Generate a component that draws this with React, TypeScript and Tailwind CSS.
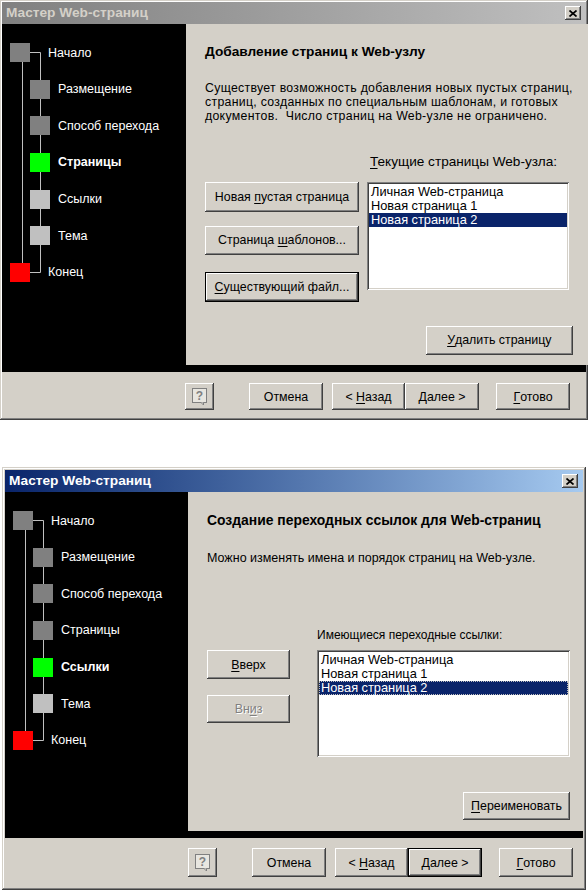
import React from "react";

type Step = { label: string; level: 1 | 2; sq: string; current?: boolean };

const raised =
  "shadow-[inset_-1px_-1px_0_#404040,inset_1px_1px_0_#fff,inset_-2px_-2px_0_#808080]";
const raisedDefault =
  "shadow-[inset_0_0_0_1px_#000,inset_-2px_-2px_0_#404040,inset_2px_2px_0_#fff,inset_-3px_-3px_0_#808080]";
const sunken =
  "shadow-[inset_1px_1px_0_#808080,inset_-1px_-1px_0_#fff,inset_2px_2px_0_#404040,inset_-2px_-2px_0_#d4d0c8]";

function U({ children }: { children: React.ReactNode }) {
  return <span className="underline underline-offset-[2px]">{children}</span>;
}

function Btn({
  children,
  className = "",
  def = false,
  disabled = false,
}: {
  children: React.ReactNode;
  className?: string;
  def?: boolean;
  disabled?: boolean;
}) {
  return (
    <button
      type="button"
      className={`flex items-center justify-center bg-[#d4d0c8] text-[12.4px] leading-[14px] ${
        def ? raisedDefault : raised
      } ${disabled ? "text-[#808080] [text-shadow:1px_1px_0_#fff]" : "text-black"} ${className}`}
    >
      {children}
    </button>
  );
}

function CloseBox() {
  return (
    <div className={`flex h-[14px] w-[16px] items-center justify-center bg-[#d4d0c8] ${raised}`}>
      <svg width="8" height="7" viewBox="0 0 8 7">
        <path d="M0.5 0.5L7.5 6.5M7.5 0.5L0.5 6.5" stroke="#000" strokeWidth="1.7" />
      </svg>
    </div>
  );
}

function HelpIcon() {
  return (
    <svg width="18" height="19" viewBox="0 0 18 19">
      <rect x="1.5" y="1.5" width="14" height="14" fill="#e8e6e0" stroke="#808080" />
      <path d="M10 15.5L12.5 18L12.5 15.5" fill="#e8e6e0" stroke="#808080" />
      <text
        x="8.5"
        y="13"
        textAnchor="middle"
        fontSize="12"
        fontWeight="bold"
        fill="#808080"
        fontFamily="Liberation Sans, sans-serif"
      >
        ?
      </text>
    </svg>
  );
}

function Tree({ steps }: { steps: Step[] }) {
  return (
    <div className="relative h-full w-full bg-black">
      <svg className="absolute left-0 top-0" width="184" height="280">
        <path
          d="M20.5 38V239M38.5 28.5V248.5M28 28.5H38.5M28 248.5H38.5"
          stroke="#c0c0c0"
          strokeWidth="1"
          fill="none"
        />
      </svg>
      <div className="relative flex flex-col pt-[19px]">
        {steps.map((s) => (
          <div key={s.label} className="h-[36.67px]">
            <div className="flex h-[19px] items-center">
              <div
                className={`h-[19px] w-[20px] shrink-0 ${s.sq} ${s.level === 1 ? "ml-[8px]" : "ml-[28px]"}`}
              />
              <span
                className={`whitespace-nowrap text-[12.5px] leading-[14px] text-white ${
                  s.level === 1 ? "ml-[18px]" : "ml-[8px]"
                } ${s.current ? "font-bold" : ""}`}
              >
                {s.label}
              </span>
            </div>
          </div>
        ))}
      </div>
    </div>
  );
}

function TitleBar({ active }: { active: boolean }) {
  return (
    <div
      className={`flex h-[22px] items-center justify-between pr-[5px] ${
        active
          ? "bg-linear-to-r from-[#0a246a] to-[#a6caf0] text-white"
          : "bg-linear-to-r from-[#808080] to-[#c0c0c0] text-[#d4d0c8]"
      }`}
    >
      <span className="pl-[4px] text-[13.7px] font-bold leading-[16px]">Мастер Web-страниц</span>
      <CloseBox />
    </div>
  );
}

function BottomBar({ h, pt, def }: { h: string; pt: string; def: boolean }) {
  return (
    <div className={`flex items-start ${pt}`}>
      <Btn className={`ml-[183px] w-[29px] ${h}`}>
        <HelpIcon />
      </Btn>
      <Btn className={`ml-[35px] w-[74px] ${h}`}>Отмена</Btn>
      <Btn className={`ml-[9px] w-[73px] ${h}`}>
        &lt;&nbsp;<U>Н</U>азад
      </Btn>
      <Btn def={def} className={`w-[74px] ${h}`}>
        <U>Д</U>алее &gt;
      </Btn>
      <Btn className={`ml-[17px] w-[74px] ${h}`}>
        <U>Г</U>отово
      </Btn>
    </div>
  );
}

const steps1: Step[] = [
  { label: "Начало", level: 1, sq: "bg-[#808080]" },
  { label: "Размещение", level: 2, sq: "bg-[#808080]" },
  { label: "Способ перехода", level: 2, sq: "bg-[#808080]" },
  { label: "Страницы", level: 2, sq: "bg-[#00ff00]", current: true },
  { label: "Ссылки", level: 2, sq: "bg-[#c0c0c0]" },
  { label: "Тема", level: 2, sq: "bg-[#c0c0c0]" },
  { label: "Конец", level: 1, sq: "bg-[#ff0000]" },
];

const steps2: Step[] = [
  { label: "Начало", level: 1, sq: "bg-[#808080]" },
  { label: "Размещение", level: 2, sq: "bg-[#808080]" },
  { label: "Способ перехода", level: 2, sq: "bg-[#808080]" },
  { label: "Страницы", level: 2, sq: "bg-[#808080]" },
  { label: "Ссылки", level: 2, sq: "bg-[#00ff00]", current: true },
  { label: "Тема", level: 2, sq: "bg-[#c0c0c0]" },
  { label: "Конец", level: 1, sq: "bg-[#ff0000]" },
];

function ListItems({ focus }: { focus?: boolean }) {
  return (
    <div className="flex flex-col px-[2px] pt-[3px] text-[12.8px] leading-[14px] text-black">
      <div className="pl-[2px]">Личная Web-страница</div>
      <div className="pl-[2px]">Новая страница 1</div>
      <div
        className={`bg-[#0a246a] text-white ${
          focus ? "border border-dotted border-[#c0c0c0] pl-[1px] leading-[12px]" : "pl-[2px]"
        }`}
      >
        Новая страница 2
      </div>
    </div>
  );
}

function WizardPages() {
  return (
    <div className="flex h-[341px]">
      <div className="w-[184px] shrink-0">
        <Tree steps={steps1} />
      </div>
      <div className="flex flex-1 flex-col bg-[#d4d0c8] pl-[19px] pr-[15px] pt-[20px] text-black">
        <h2 className="text-[13.7px] font-bold leading-[16px]">Добавление страниц к Web-узлу</h2>
        <p className="mt-[21px] whitespace-nowrap text-[12.3px] leading-[14px] tracking-[0.3px]">
          Существует возможность добавления новых пустых страниц,
          <br />
          страниц, созданных по специальным шаблонам, и готовых
          <br />
          документов.&nbsp; Число страниц на Web-узле не ограничено.
        </p>
        <div className="ml-[165px] mt-[31.5px] text-[13.6px] leading-[14px]">
          <U>Т</U>екущие страницы Web-узла:
        </div>
        <div className="mt-[13px] flex items-start">
          <div className="flex w-[154px] flex-col">
            <Btn className="h-[30px] w-[154px]">
              Новая&nbsp;<U>п</U>устая страница
            </Btn>
            <Btn className="mt-[14px] h-[29px] w-[154px]">
              Страница&nbsp;<U>ш</U>аблонов...
            </Btn>
            <Btn def className="mt-[17px] h-[30px] w-[154px]">
              <U>С</U>уществующий файл...
            </Btn>
          </div>
          <div className={`ml-[8px] h-[108px] w-[202px] bg-white ${sunken}`}>
            <ListItems />
          </div>
        </div>
        <Btn className="mt-[24px] h-[29px] w-[147px] self-end">
          <U>У</U>далить страницу
        </Btn>
      </div>
    </div>
  );
}

function WizardLinks() {
  return (
    <div className="flex h-[339px]">
      <div className="w-[183px] shrink-0">
        <Tree steps={steps2} />
      </div>
      <div className="flex flex-1 flex-col bg-[#d4d0c8] pl-[19px] pr-[13px] pt-[20px] text-black">
        <h2 className="text-[13.9px] font-bold leading-[16px]">
          Создание переходных ссылок для Web-страниц
        </h2>
        <p className="mt-[23.5px] whitespace-nowrap text-[12.5px] leading-[13px]">
          Можно изменять имена и порядок страниц на Web-узле.
        </p>
        <div className="ml-[110px] mt-[63.5px] text-[12px] leading-[14px]">
          Имеющиеся переходные ссылки:
        </div>
        <div className="mt-[8px] flex items-start">
          <div className="flex w-[83px] flex-col">
            <Btn className="h-[29px] w-[83px]">
              <U>В</U>верх
            </Btn>
            <Btn disabled className="mt-[16px] h-[28px] w-[83px]">
              Вн<U>и</U>з
            </Btn>
          </div>
          <div className={`ml-[27px] h-[107px] w-[253px] bg-white ${sunken}`}>
            <ListItems focus />
          </div>
        </div>
        <Btn className="mt-[35px] h-[28px] w-[107px] self-end">
          <U>П</U>ереименовать
        </Btn>
      </div>
    </div>
  );
}

const frame =
  "bg-[#d4d0c8] shadow-[inset_-1px_-1px_0_#404040,inset_1px_1px_0_#d4d0c8,inset_-2px_-2px_0_#808080,inset_2px_2px_0_#fff]";

export default function App() {
  return (
    <div className="h-[891px] w-[588px] overflow-hidden bg-white font-['Liberation_Sans',Arial,sans-serif]">
      {/* inactive wizard: pages step */}
      <div className={`h-[420px] w-[588px] p-[2px] ${frame}`}>
        <TitleBar active={false} />
        <WizardPages />
        <div className="h-[7px] bg-black" />
        <BottomBar h="h-[27px]" pt="pt-[11px]" def={false} />
      </div>

      {/* active wizard: links step */}
      <div className={`ml-[2px] mt-[47px] h-[423px] w-[584px] p-[3px] ${frame}`}>
        <TitleBar active />
        <WizardLinks />
        <div className="h-[7px] bg-black" />
        <BottomBar h="h-[29px]" pt="pt-[10px]" def />
      </div>
    </div>
  );
}
